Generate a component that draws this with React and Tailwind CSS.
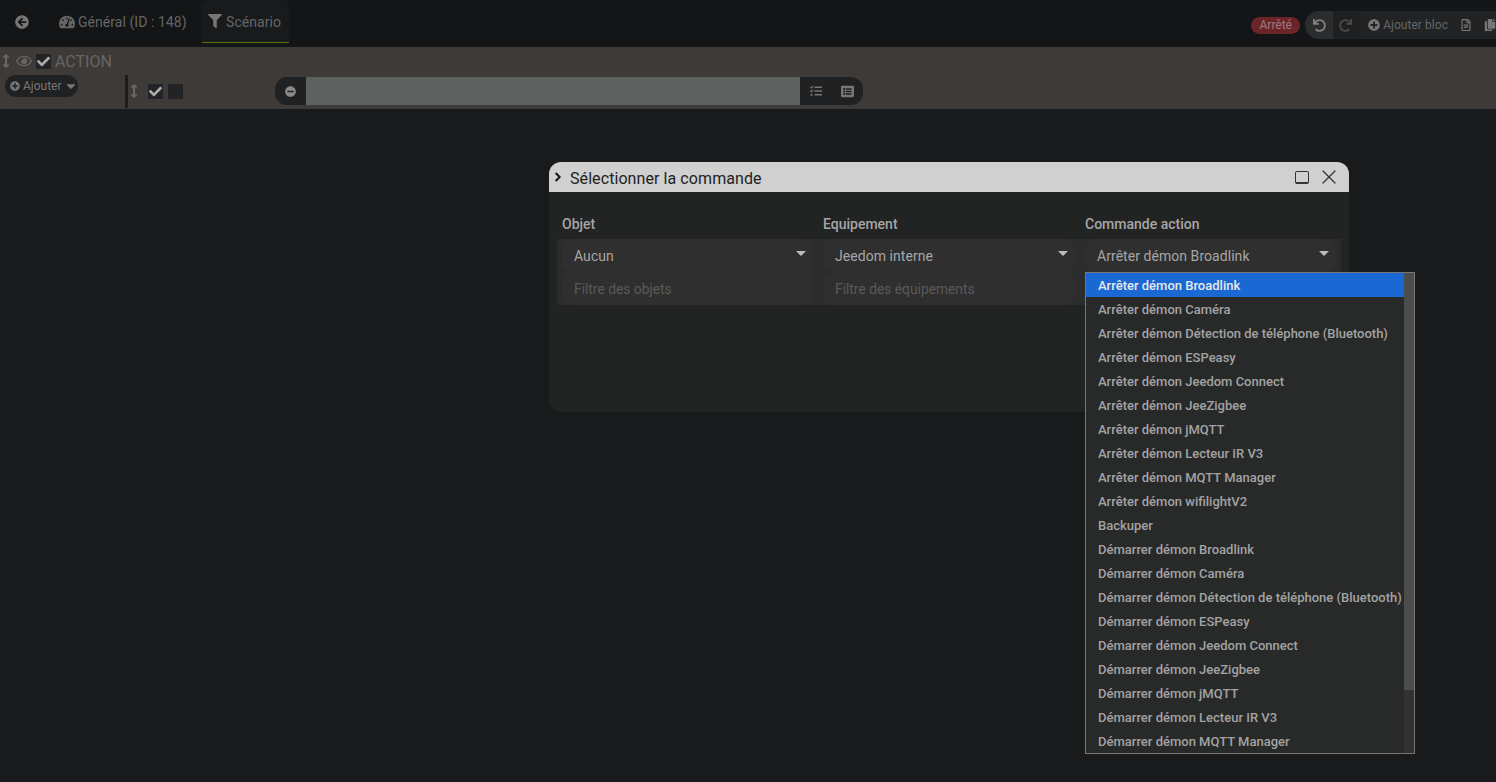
import { FaArrowCircleLeft, FaTachometerAlt, FaFilter, FaArrowsAltV, FaRegEye, FaCheck, FaPlusCircle, FaCaretDown, FaMinusCircle, FaTasks, FaListAlt, FaUndo, FaRedo, FaRegFileAlt, FaCopy, FaChevronRight } from "react-icons/fa";
import { X } from "lucide-react";

const commands = [
  "Arrêter démon Broadlink",
  "Arrêter démon Caméra",
  "Arrêter démon Détection de téléphone (Bluetooth)",
  "Arrêter démon ESPeasy",
  "Arrêter démon Jeedom Connect",
  "Arrêter démon JeeZigbee",
  "Arrêter démon jMQTT",
  "Arrêter démon Lecteur IR V3",
  "Arrêter démon MQTT Manager",
  "Arrêter démon wifilightV2",
  "Backuper",
  "Démarrer démon Broadlink",
  "Démarrer démon Caméra",
  "Démarrer démon Détection de téléphone (Bluetooth)",
  "Démarrer démon ESPeasy",
  "Démarrer démon Jeedom Connect",
  "Démarrer démon JeeZigbee",
  "Démarrer démon jMQTT",
  "Démarrer démon Lecteur IR V3",
  "Démarrer démon MQTT Manager",
];

function Check({ on }) {
  return (
    <span className="flex h-[15px] w-[15px] items-center justify-center bg-[#212326] text-[#acacac]">
      {on && <FaCheck className="text-[13px]" />}
    </span>
  );
}

function Picker({ value, filter }) {
  return (
    <div>
      <div className="relative flex h-[33px] items-center rounded-[10px] bg-[#2f2f2f] pl-3 pt-[2px] text-[14px] tracking-[0.05px] text-[#a6a6a6]">
        {value}
        <svg className="absolute right-[7px] top-[12px] text-[#bdbdbd]" width="10" height="5" viewBox="0 0 10 5">
          <path d="M0 0h10L5 5z" fill="currentColor" />
        </svg>
      </div>
      {filter && (
        <div className="flex h-[33px] items-center rounded-[10px] bg-[#2f2f2f] pl-3 pt-[2px] text-[13.8px] text-[#5a5a5a]">{filter}</div>
      )}
    </div>
  );
}

export default function App() {
  return (
    <div className="relative h-[782px] w-[1496px] overflow-hidden bg-[#181a1c] font-['Roboto',sans-serif]">
      <div className="flex h-[47px] items-start bg-[#131517] text-[14px] tracking-[0.05px] text-[#666666]">
        <FaArrowCircleLeft className="ml-[15px] mt-[15px] text-[14px] text-[#777777]" />
        <div className="ml-[23px] flex h-[43px] w-[143px] items-center pl-[7px]">
          <FaTachometerAlt className="mr-[3px] text-[16px]" />
          <span className="pt-[2px]">Général (ID : 148)</span>
        </div>
        <div className="ml-[7px] flex h-[43px] w-[87px] items-center justify-center gap-[4px] rounded-t-md border-b border-[#55720f] bg-[#181a1c] pr-[2px]">
          <FaFilter className="text-[14px] text-[#777777]" />
          <span className="pt-[2px]">Scénario</span>
        </div>
        <div className="ml-auto mt-[11px] flex items-center">
          <span className="rounded-full bg-[#6b2529] px-2 text-[12px] leading-[17px] tracking-normal text-[#a07a7a]">Arrêté</span>
          <div className="ml-[5px] flex h-[28px] w-[191px] items-center overflow-hidden rounded-l-[14px] bg-[#212325] text-[12px] tracking-[0.05px]">
            <span className="flex h-full w-[28px] items-center justify-center bg-[#2a2c2e] pl-[2px] text-[#808080]"><FaUndo className="text-[13px]" /></span>
            <span className="flex h-full w-[27px] items-center justify-center bg-[#1e2021] text-[#4a4a4a]"><FaRedo className="text-[13px]" /></span>
            <span className="flex items-center gap-[3px] whitespace-nowrap pl-[9px]"><FaPlusCircle className="text-[12px] text-[#777777]" />Ajouter bloc</span>
            <FaRegFileAlt className="ml-[12px] shrink-0 text-[12px] text-[#777777]" />
            <FaCopy className="ml-[12px] shrink-0 text-[12px] text-[#777777]" />
          </div>
        </div>
      </div>

      <div className="flex h-[62px] bg-[#3e3a37]">
        <div className="w-[125px] shrink-0">
          <div className="flex h-[28px] items-center text-[#666666]">
            <FaArrowsAltV className="ml-[-1px] text-[14px]" />
            <FaRegEye className="ml-[3px] text-[16px]" />
            <span className="ml-[4px]"><Check on /></span>
            <span className="ml-[4px] pt-[2px] text-[16px] leading-none">ACTION</span>
          </div>
          <div className="ml-[5px] flex h-[22px] w-[73px] items-center rounded-full bg-[#1f2123] pl-[5px] text-[12px] text-[#777777]">
            <FaPlusCircle className="mr-[3px] text-[10px]" />
            Ajouter
            <FaCaretDown className="ml-[2px] text-[14px]" />
          </div>
        </div>
        <div className="mt-[28px] h-[33px] w-[3px] shrink-0 bg-[#1a1c1e]" />
        <div className="flex items-center self-end pb-[4px]">
          <FaArrowsAltV className="ml-[-1px] mb-[1px] text-[14px] text-[#666666]" />
          <span className="ml-[7px]"><Check on /></span>
          <span className="ml-[5px]"><Check /></span>
          <div className="ml-[92px] flex h-[28px] w-[588px] overflow-hidden rounded-[12px] bg-[#1f2123]">
            <span className="flex w-[31px] items-center justify-center text-[#8a8a8a]"><FaMinusCircle className="text-[11px]" /></span>
            <span className="w-[494px] bg-[#5e6160]" />
            <span className="flex w-[32px] items-center justify-center text-[#777777]"><FaTasks className="text-[12px]" /></span>
            <span className="flex w-[30px] items-center justify-center text-[#777777]"><FaListAlt className="text-[13px]" /></span>
          </div>
        </div>
      </div>

      <div className="absolute left-[549px] top-[162px] h-[250px] w-[800px] rounded-[12px] bg-[#222323]">
        <div className="flex h-[30px] items-center rounded-t-[12px] bg-[#d0d0d0] text-[16px] tracking-[0.08px] text-[#222222]">
          <FaChevronRight className="ml-[4px] stroke-current stroke-[30] text-[10px] text-[#111111]" />
          <span className="ml-[7px] mt-[4px]">Sélectionner la commande</span>
          <span className="ml-auto mr-[8px] h-[13px] w-[14px] rounded-[2px] border-[1.5px] border-b-2 border-[#333333]" />
          <X className="mr-[8px] h-[24px] w-[24px] text-[#333333]" strokeWidth={1.25} />
        </div>
        <div className="mx-[8px] mt-[22px] w-[784px]">
          <div className="grid grid-cols-[251px_252px_251px] gap-x-[10px] px-[5px] text-[14px] font-medium leading-[20px] text-[#a6a6a6]">
            <span>Objet</span>
            <span>Equipement</span>
            <span>Commande action</span>
          </div>
          <div className="mt-[5px] grid h-[66px] grid-cols-[251px_252px_251px] gap-x-[10px] bg-[#2b2c2c] px-[5px]">
            <Picker value="Aucun" filter="Filtre des objets" />
            <Picker value="Jeedom interne" filter="Filtre des équipements" />
            <Picker value="Arrêter démon Broadlink" />
          </div>
        </div>
      </div>

      <div className="absolute left-[1085px] top-[272px] flex h-[482px] w-[330px] overflow-hidden border border-[#777777] bg-[#282929] text-[13px] font-medium text-[#a3a3a3]">
        <div className="min-w-0 flex-1">
          {commands.map((c, i) => (
            <div key={c} className={`h-[24px] whitespace-nowrap pl-[12px] pt-[1px] leading-[24px] ${i === 0 ? "bg-[#1a68d4] text-[#e8e8e8]" : ""}`}>{c}</div>
          ))}
        </div>
        <div className="w-[10px] shrink-0 bg-[#323232]">
          <div className="h-[417px] bg-[#4b4c4d]" />
        </div>
      </div>
    </div>
  );
}
